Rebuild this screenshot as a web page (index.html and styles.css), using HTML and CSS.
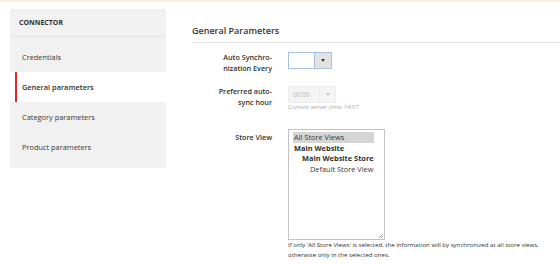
FILE: index.html
```html
<!DOCTYPE html>
<html lang="en">
<head>
    <meta charset="UTF-8">
    <title>Connector - General Parameters</title>
    <link rel="stylesheet" href="styles.css">
</head>
<body>
    <div class="top-strip"></div>
    <div class="page">
        <div class="sidebar">
            <div class="sidebar-title">CONNECTOR</div>
            <ul class="tabs">
                <li class="tab">Credentials</li>
                <li class="tab active">General parameters</li>
                <li class="tab">Category parameters</li>
                <li class="tab">Product parameters</li>
            </ul>
        </div>

        <div class="main">
            <h2 class="section-title">General Parameters</h2>

            <div class="field">
                <label class="field-label">Auto Synchro-<br>nization Every</label>
                <div class="field-control">
                    <div class="select focus">
                        <span class="select-value"></span>
                        <span class="select-btn"><span class="arrow"></span></span>
                    </div>
                </div>
            </div>

            <div class="field hour-field">
                <label class="field-label">Preferred auto-<br>sync hour</label>
                <div class="field-control">
                    <div class="select disabled">
                        <span class="select-value">00:00</span>
                        <span class="select-btn"><span class="arrow"></span></span>
                    </div>
                    <div class="note">Current server time: 14:07</div>
                </div>
            </div>

            <div class="field store-field">
                <label class="field-label">Store View</label>
                <div class="field-control">
                    <div class="multiselect">
                        <div class="opt selected">All Store Views</div>
                        <div class="opt group">Main Website</div>
                        <div class="opt group sub">Main Website Store</div>
                        <div class="opt leaf">Default Store View</div>
                        <span class="resize"></span>
                    </div>
                    <div class="help">If only 'All Store Views' is selected, the information will by synchronized at all store views, otherwise only in the selected ones.</div>
                </div>
            </div>
        </div>
    </div>
</body>
</html>
```

FILE: styles.css
```css
* {
    box-sizing: border-box;
}
body {
    margin: 0;
    font-family: "Open Sans", "Liberation Sans", sans-serif;
    color: #303030;
    background: #fff;
    overflow: hidden;
}
.top-strip {
    height: 2px;
    background: #fcefdf;
}
.page {
    display: flex;
    align-items: flex-start;
    padding: 7px 0 0 10px;
}

/* sidebar */
.sidebar {
    width: 156px;
    background: #f1f1f1;
    padding-bottom: 6px;
}
.sidebar-title {
    height: 28px;
    line-height: 28px;
    padding-left: 9px;
    font-size: 7px;
    font-weight: 700;
    color: #303030;
    border-bottom: 1px solid #e3e3e3;
}
.tabs {
    list-style: none;
    margin: 5px 0 0;
    padding: 0;
}
.tab {
    height: 30px;
    line-height: 30px;
    padding-left: 12px;
    font-size: 7.4px;
    color: #41362f;
}
.tab.active {
    background: linear-gradient(to right, #fff 5px, #e22626 5px, #e22626 7px, #fff 7px);
    font-weight: 600;
    color: #303030;
}

/* main */
.main {
    flex: 1;
    margin-left: 26px;
}
.section-title {
    margin: 0;
    padding: 16px 0 5px;
    font-size: 9px;
    line-height: 12px;
    font-weight: 600;
    color: #41362f;
    border-bottom: 1px solid #e3e3e3;
}
.field {
    display: flex;
    margin-top: 9px;
}
.hour-field {
    margin-top: 12px;
}
.store-field {
    margin-top: 17px;
}
.field-label {
    width: 80px;
    text-align: right;
    font-size: 7.2px;
    font-weight: 600;
    line-height: 11px;
    color: #303030;
}
.store-field .field-label {
    padding-top: 3px;
}
.field-control {
    margin-left: 16px;
}
.select {
    display: flex;
    height: 17px;
    border: 1px solid #adadad;
    background: #fff;
}
.select.focus {
    width: 44px;
    border-color: #a7c1e3;
}
.select-value {
    width: 25px;
    font-size: 6.5px;
    line-height: 15px;
    padding-left: 4px;
}
.select-btn {
    flex: 1;
    background: #e3e3e3;
    border-left: 1px solid #a7c1e3;
    display: flex;
    align-items: center;
    justify-content: center;
}
.arrow {
    width: 0;
    height: 0;
    border-left: 2.5px solid transparent;
    border-right: 2.5px solid transparent;
    border-top: 3px solid #41362f;
}
.select.disabled {
    width: 48px;
    border-color: #ececec;
    background: #f4f4f4;
}
.select.disabled .select-value {
    width: 30px;
    color: #b6b6b6;
}
.select.disabled .select-btn {
    background: #f4f4f4;
    border-left: 1px solid #ececec;
}
.select.disabled .arrow {
    border-top-color: #c4c4c4;
}
.note {
    font-size: 5.8px;
    line-height: 9px;
    color: #a6a6a6;
}

.multiselect {
    position: relative;
    width: 97px;
    height: 111px;
    border: 1px solid #c2c2c2;
    padding: 2px 4px;
    font-size: 7.4px;
}
.opt {
    height: 10.7px;
    line-height: 10.7px;
    padding-left: 1px;
    white-space: nowrap;
    color: #41362f;
}
.opt.selected {
    background: #d5d5d5;
    width: 81px;
}
.opt.group {
    font-weight: 700;
    color: #303030;
}
.opt.sub {
    padding-left: 9px;
}
.opt.leaf {
    padding-left: 17px;
}
.resize {
    position: absolute;
    right: 1px;
    bottom: 1px;
    width: 4px;
    height: 4px;
    background: linear-gradient(135deg, transparent 45%, #aaa 50%, transparent 60%, transparent 70%, #aaa 75%, transparent 85%);
}
.help {
    width: 262px;
    font-size: 6.1px;
    line-height: 10px;
    color: #303030;
}
```
